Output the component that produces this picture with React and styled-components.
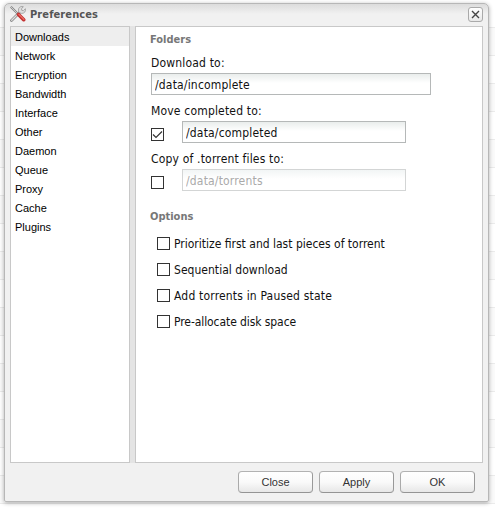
import { useState } from "react";
import styled, { createGlobalStyle } from "styled-components";

const GlobalStyle = createGlobalStyle`
  * {
    box-sizing: border-box;
  }

  body {
    margin: 0;
    overflow: hidden;
    background: #fff;
  }
`;

const tahoma = `"DejaVu Sans Condensed", "DejaVu Sans", sans-serif`;
const arial = `"Liberation Sans", Arial, sans-serif`;

const Page = styled.div`
  height: 508px;
  padding: 3px 6px 6px 4px;
  background: linear-gradient(
      #ebebeb 1px,
      #fafafa 1px,
      #fafafa 28px,
      #ebebeb 28px,
      #ebebeb 29px,
      #fff 29px
    )
    0 27px / 100% 56px;
  background-repeat: repeat-y;
`;

const Window = styled.div`
  width: 485px;
  height: 499px;
  display: flex;
  flex-direction: column;
  border: 1px solid #b7b7b7;
  border-radius: 5px 5px 2px 2px;
  background: linear-gradient(#dcdcdc, #f1f1f1 10px);
  box-shadow: 0 1px 4px rgba(0, 0, 0, 0.32);
`;

const Header = styled.div`
  height: 22px;
  padding: 0 5px;
  display: flex;
  align-items: flex-start;
`;

const Tools = styled.svg`
  width: 16px;
  height: 16px;
  margin-top: 2px;
`;

const Title = styled.div`
  flex: 1;
  margin-left: 4px;
  padding-top: 3px;
  font: bold 11px/15px ${tahoma};
  color: #555;
  letter-spacing: 0.1px;
`;

const CloseButton = styled.button`
  width: 15px;
  height: 15px;
  margin-top: 3px;
  padding: 0;
  display: flex;
  align-items: center;
  justify-content: center;
  border: 1px solid #aaa;
  border-radius: 3px;
  background: linear-gradient(#fff, #e8e8e8);
`;

const Body = styled.div`
  height: 437px;
  padding: 0 5px;
  display: flex;
  gap: 5px;
`;

const Sidebar = styled.div`
  width: 120px;
  border: 1px solid #c8c8c8;
  background: #fff;
  box-shadow: 5px 0 0 #e4e4e4;
`;

const Category = styled.div`
  height: 19px;
  padding: 1px 4px 0;
  font: 11px/18px ${arial};
  color: #000;
  cursor: default;
  background: ${(props) => (props.$active ? "#eee" : "#fff")};
`;

const Content = styled.div`
  position: relative;
  width: 348px;
  padding: 4px 0 0 14px;
  border: 1px solid #c8c8c8;
  background: #fff;
  font: 12px/16px ${tahoma};
  color: #111;
`;

const Heading = styled.div`
  height: 24px;
  margin-top: ${(props) => props.$gap || 0}px;
  font: bold 11px/${(props) => (props.$gap ? 16 : 18)}px ${tahoma};
  color: #777;
`;

const Field = styled.div`
  height: 48px;
  padding-left: 1px;
`;

const Label = styled.div`
  height: 18px;
  letter-spacing: 0.18px;
`;

const FieldRow = styled.div`
  display: flex;
  align-items: center;
  gap: 18px;
`;

const PathInput = styled.input`
  width: ${(props) => (props.$wide ? 280 : 224)}px;
  height: 22px;
  padding: 2px 3px 0;
  border: 1px solid #b5b8b8;
  outline: none;
  background: linear-gradient(#e9edec, #fff 9px);
  font: 12px ${tahoma};
  letter-spacing: 0.18px;
  color: #111;

  &:disabled {
    border-color: #d3d5d5;
    background: linear-gradient(#f2f5f5, #fff 9px);
    color: #aaa;
  }
`;

const Box = styled.button`
  width: 13px;
  height: 13px;
  margin-top: ${(props) => props.$offset || 0}px;
  padding: 0;
  flex: none;
  display: flex;
  border: 1px solid #333;
  background: #fff;
`;

const Options = styled.div`
  padding: 4px 0 0 7px;
`;

const Option = styled.div`
  height: 26px;
  display: flex;
  align-items: flex-start;
  gap: 4px;
  line-height: 15px;
  letter-spacing: ${(props) => props.$spacing}px;
`;

const Footer = styled.div`
  padding: 8px 13px 0 0;
  display: flex;
  justify-content: flex-end;
  gap: 6px;
`;

const Button = styled.button`
  width: 75px;
  height: 22px;
  padding: 0;
  border: 1px solid #999;
  border-color: #b2b2b2 #999 #949494 #aaa;
  border-radius: 4px;
  background: linear-gradient(#fff, #fafafa 50%, #e7e7e7);
  font: 11px ${arial};
  color: #333;
`;

const categories = [
  "Downloads",
  "Network",
  "Encryption",
  "Bandwidth",
  "Interface",
  "Other",
  "Daemon",
  "Queue",
  "Proxy",
  "Cache",
  "Plugins",
];

const options = [
  { name: "Prioritize first and last pieces of torrent", spacing: 0 },
  { name: "Sequential download", spacing: 0.03 },
  { name: "Add torrents in Paused state", spacing: 0.18 },
  { name: "Pre-allocate disk space", spacing: -0.08 },
];

const ToolsIcon = () => (
  <Tools viewBox="0 0 16 16">
    <path d="M1.5 14.5 11 5" stroke="#888" strokeWidth="2.8" strokeLinecap="round" />
    <path d="M1.7 14.3 11 5" stroke="#ddd" strokeWidth="1.3" strokeLinecap="round" />
    <path
      d="M13.3.7 11.5 2.8l.3 1.5 1.6.4 2-2c.7 2.7-1.3 5-3.9 4.7C8.8 7.1 7.8 4.7 8.7 2.5 9.5.8 11.5.1 13.3.7Z"
      fill="#ddd"
      stroke="#999"
      strokeWidth=".8"
    />
    <path d="m.8.8 7.5 7.5" stroke="#888" strokeWidth="2.2" />
    <path d="m.8.8 7.5 7.5" stroke="#ddd" strokeWidth=".8" />
    <path d="m8.5 8.5 5.2 5.2" stroke="#c43232" strokeWidth="3.6" strokeLinecap="round" />
    <path d="m8.9 8.3 5 5" stroke="#f0766c" strokeWidth="1.2" strokeLinecap="round" />
  </Tools>
);

const CheckBox = ({ checked, offset, onClick }) => (
  <Box type="button" role="checkbox" aria-checked={checked} $offset={offset} onClick={onClick}>
    {checked && (
      <svg width="11" height="11" viewBox="0 0 11 11">
        <path d="m1 5.5 3 3L10 2.5" fill="none" stroke="#333" strokeWidth="1.2" />
      </svg>
    )}
  </Box>
);

const App = () => {
  const [active, setActive] = useState("Downloads");
  const [moveCompleted, setMoveCompleted] = useState(true);
  const [copyTorrents, setCopyTorrents] = useState(false);
  const [selected, setSelected] = useState({});

  const toggle = (name) => setSelected({ ...selected, [name]: !selected[name] });

  return (
    <Page>
      <GlobalStyle />
      <Window>
        <Header>
          <ToolsIcon />
          <Title>Preferences</Title>
          <CloseButton aria-label="Close window">
            <svg width="9" height="9" viewBox="0 0 9 9">
              <path d="m1 1 7 7M8 1 1 8" stroke="#444" strokeWidth="1.4" />
            </svg>
          </CloseButton>
        </Header>
        <Body>
          <Sidebar>
            {categories.map((name) => (
              <Category key={name} $active={name === active} onClick={() => setActive(name)}>
                {name}
              </Category>
            ))}
          </Sidebar>
          <Content>
            <Heading>Folders</Heading>
            <Field>
              <Label>Download to:</Label>
              <PathInput $wide defaultValue="/data/incomplete" />
            </Field>
            <Field>
              <Label>Move completed to:</Label>
              <FieldRow>
                <CheckBox
                  checked={moveCompleted}
                  offset={4}
                  onClick={() => setMoveCompleted(!moveCompleted)}
                />
                <PathInput defaultValue="/data/completed" disabled={!moveCompleted} />
              </FieldRow>
            </Field>
            <Field>
              <Label>Copy of .torrent files to:</Label>
              <FieldRow>
                <CheckBox
                  checked={copyTorrents}
                  offset={4}
                  onClick={() => setCopyTorrents(!copyTorrents)}
                />
                <PathInput defaultValue="/data/torrents" disabled={!copyTorrents} />
              </FieldRow>
            </Field>
            <Heading $gap={10}>Options</Heading>
            <Options>
              {options.map(({ name, spacing }) => (
                <Option key={name} $spacing={spacing}>
                  <CheckBox checked={!!selected[name]} onClick={() => toggle(name)} />
                  <span>{name}</span>
                </Option>
              ))}
            </Options>
          </Content>
        </Body>
        <Footer>
          <Button>Close</Button>
          <Button>Apply</Button>
          <Button>OK</Button>
        </Footer>
      </Window>
    </Page>
  );
};

export default App;
